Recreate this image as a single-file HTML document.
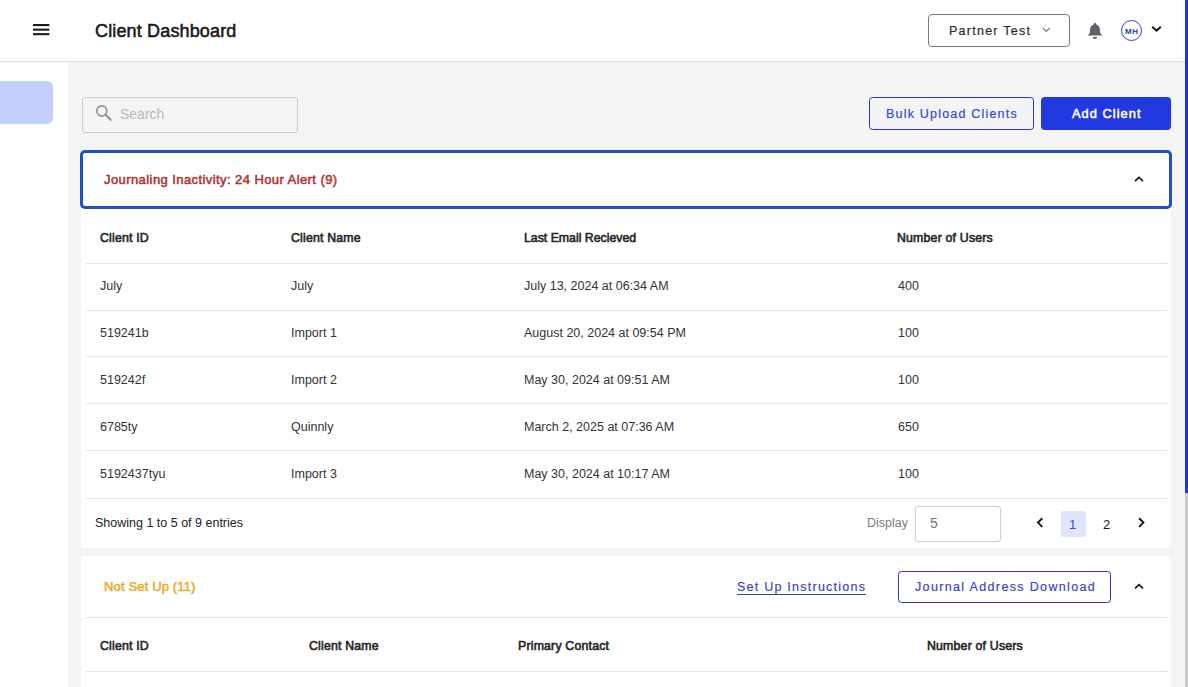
<!DOCTYPE html>
<html>
<head>
<meta charset="utf-8">
<style>
*{box-sizing:border-box;margin:0;padding:0}
html,body{width:1188px;height:687px;overflow:hidden;background:#f4f4f4;font-family:"Liberation Sans",sans-serif;color:#2b2b2b}
.abs{position:absolute}
.t{position:absolute;white-space:nowrap;line-height:1}
#header{position:absolute;left:0;top:0;width:1188px;height:62px;background:#fff;border-bottom:1px solid #dedede}
#sidebar{position:absolute;left:0;top:62px;width:68px;height:625px;background:#fff}
#sideitem{position:absolute;left:0;top:81px;width:53px;height:43px;background:#c4cefb;border-radius:0 6px 6px 0}
.ham{position:absolute;left:33px;width:16px;height:2px;background:#222}
.card{position:absolute;background:#fff;border-radius:4px}
.div{position:absolute;height:1px;background:#e3e3e3}
.th{position:absolute;white-space:nowrap;line-height:1;font-size:12.3px;letter-spacing:0.2px;font-weight:400;color:#262626;-webkit-text-stroke:0.6px #262626}
.td{position:absolute;white-space:nowrap;line-height:1;font-size:12.5px;color:#333}
#scroll{position:absolute;left:1185px;top:0;width:3px;height:687px;background:#c8c8c8}
#thumb{position:absolute;left:1185px;top:0;width:3px;height:493px;background:#2433d9}
</style>
</head>
<body>
<div id="header">
  <div class="t" style="left:95px;top:22px;font-size:18px;letter-spacing:0.15px;color:#1a1a1a;-webkit-text-stroke:0.55px #1a1a1a">Client Dashboard</div>
  <div class="abs" style="left:928px;top:14px;width:142px;height:33px;border:1px solid #7a7a7a;border-radius:4px"></div>
  <div class="t" style="left:949px;top:25px;font-size:12.5px;letter-spacing:1.25px;color:#2a2a2a;-webkit-text-stroke:0.2px #2a2a2a">Partner Test</div>
  <div class="abs" style="left:1121px;top:20px;width:21px;height:21px;border:1.5px solid #3338d8;border-radius:50%"></div>
  <div class="t" style="left:1125px;top:27.5px;font-size:8px;font-weight:700;color:#2e3ab8;letter-spacing:0.6px">MH</div>
</div>
<div id="sidebar"></div>
<div id="sideitem"></div>

<!-- search -->
<div class="abs" style="left:82px;top:97px;width:216px;height:36px;border:1px solid #cdcdcd;border-radius:3px;background:#f4f4f4"></div>
<div class="t" style="left:120px;top:107px;font-size:14px;color:#b9b9b9">Search</div>

<!-- buttons -->
<div class="abs" style="left:869px;top:97px;width:165px;height:33px;border:1px solid #2e36c6;border-radius:3.5px;background:#f3f3f5"></div>
<div class="t" style="left:886px;top:108px;font-size:12.5px;letter-spacing:1.2px;color:#3342c8;-webkit-text-stroke:0.15px #3342c8">Bulk Upload Clients</div>
<div class="abs" style="left:1041px;top:97px;width:130px;height:33px;border-radius:4px;background:#2339e0"></div>
<div class="t" style="left:1072px;top:108px;font-size:12.8px;font-weight:400;letter-spacing:1.05px;-webkit-text-stroke:0.55px #fff;color:#fff">Add Client</div>

<!-- card 1 -->
<div class="card" style="left:81px;top:152px;width:1090px;height:396px"></div>
<div class="abs" style="left:80px;top:150px;width:1092px;height:59px;border:3px solid #2050c6;border-radius:5px;background:#fff"></div>
<div class="t" style="left:104px;top:173px;font-size:13px;font-weight:400;letter-spacing:0.42px;-webkit-text-stroke:0.5px #ad3232;color:#ad3232">Journaling Inactivity: 24 Hour Alert (9)</div>

<div class="th" style="left:100px;top:232px">Client ID</div>
<div class="th" style="left:291px;top:232px">Client Name</div>
<div class="th" style="left:524px;top:232px;font-size:12.3px;letter-spacing:0">Last Email Recieved</div>
<div class="th" style="left:897px;top:232px">Number of Users</div>
<div class="div" style="left:86px;top:263px;width:1081px"></div>

<div class="td" style="left:100px;top:280px">July</div>
<div class="td" style="left:291px;top:280px">July</div>
<div class="td" style="left:524px;top:280px">July 13, 2024 at 06:34 AM</div>
<div class="td" style="left:898px;top:280px">400</div>
<div class="div" style="left:86px;top:310px;width:1081px"></div>

<div class="td" style="left:100px;top:327px">519241b</div>
<div class="td" style="left:291px;top:327px">Import 1</div>
<div class="td" style="left:524px;top:327px">August 20, 2024 at 09:54 PM</div>
<div class="td" style="left:898px;top:327px">100</div>
<div class="div" style="left:86px;top:356px;width:1081px"></div>

<div class="td" style="left:100px;top:374px">519242f</div>
<div class="td" style="left:291px;top:374px">Import 2</div>
<div class="td" style="left:524px;top:374px">May 30, 2024 at 09:51 AM</div>
<div class="td" style="left:898px;top:374px">100</div>
<div class="div" style="left:86px;top:403px;width:1081px"></div>

<div class="td" style="left:100px;top:421px">6785ty</div>
<div class="td" style="left:291px;top:421px">Quinnly</div>
<div class="td" style="left:524px;top:421px">March 2, 2025 at 07:36 AM</div>
<div class="td" style="left:898px;top:421px">650</div>
<div class="div" style="left:86px;top:450px;width:1081px"></div>

<div class="td" style="left:100px;top:468px">5192437tyu</div>
<div class="td" style="left:291px;top:468px">Import 3</div>
<div class="td" style="left:524px;top:468px">May 30, 2024 at 10:17 AM</div>
<div class="td" style="left:898px;top:468px">100</div>
<div class="div" style="left:86px;top:498px;width:1081px"></div>

<div class="td" style="left:95px;top:517px;color:#222">Showing 1 to 5 of 9 entries</div>
<div class="td" style="left:867px;top:517px;color:#7b7b7b">Display</div>
<div class="abs" style="left:915px;top:506px;width:86px;height:36px;border:1px solid #cfcfcf;border-radius:3px;background:#fff"></div>
<div class="t" style="left:930px;top:516px;font-size:14px;color:#747474">5</div>
<div class="abs" style="left:1061px;top:511px;width:25px;height:26px;background:#e1e5fb;border-radius:2px"></div>
<div class="t" style="left:1069px;top:518px;font-size:13px;color:#3a4ad4">1</div>
<div class="t" style="left:1103px;top:518px;font-size:13px;color:#1a1a1a">2</div>

<!-- card 2 -->
<div class="card" style="left:81px;top:556px;width:1090px;height:140px"></div>
<div class="t" style="left:104px;top:580px;font-size:13px;font-weight:400;letter-spacing:0.15px;-webkit-text-stroke:0.55px #e8ad2c;color:#e8ad2c">Not Set Up (11)</div>
<div class="t" style="left:737px;top:581px;font-size:12.5px;letter-spacing:1.24px;color:#3342c8;-webkit-text-stroke:0.15px #3342c8;text-decoration:underline;text-underline-offset:3px">Set Up Instructions</div>
<div class="abs" style="left:898px;top:571px;width:213px;height:32px;border:1px solid #2e36c6;border-radius:3.5px;background:#fff"></div>
<div class="t" style="left:915px;top:581px;font-size:12.5px;letter-spacing:1.35px;color:#3342c8;-webkit-text-stroke:0.15px #3342c8">Journal Address Download</div>
<div class="abs" style="left:81px;top:617px;width:1090px;height:80px;border-top:1px solid #e3e3e3;border-radius:6px 6px 0 0"></div>
<div class="th" style="left:100px;top:640px">Client ID</div>
<div class="th" style="left:309px;top:640px">Client Name</div>
<div class="th" style="left:518px;top:640px">Primary Contact</div>
<div class="th" style="left:927px;top:640px">Number of Users</div>
<div class="div" style="left:86px;top:671px;width:1081px"></div>

<svg id="icons" style="position:absolute;left:0;top:0" width="1188" height="687" viewBox="0 0 1188 687">
  <g fill="#1c1c1c"><rect x="33" y="24" width="16.3" height="2.1"/><rect x="33" y="28.6" width="16.3" height="2.1"/><rect x="33" y="33.1" width="16.3" height="2.1"/></g>
  <path d="M1043 28 L1046.3 31.3 L1049.6 28" fill="none" stroke="#777" stroke-width="1.2"/>
  <g fill="#5d6169"><circle cx="1095" cy="24.2" r="1.3"/><path d="M1095 24.4 C1091.8 24.4 1090.3 26.6 1090.1 29.6 L1089.9 32.4 C1089.8 33.6 1088.2 34.4 1088.2 35.6 L1101.8 35.6 C1101.8 34.4 1100.2 33.6 1100.1 32.4 L1099.9 29.6 C1099.7 26.6 1098.2 24.4 1095 24.4 Z"/><path d="M1092.8 37 L1097.2 37 C1097.2 38.2 1096.2 39 1095 39 C1093.8 39 1092.8 38.2 1092.8 37 Z"/></g>
  <path d="M1152.2 26.7 L1156.5 30.6 L1160.8 26.7" fill="none" stroke="#1a1a1a" stroke-width="2"/>
  <circle cx="101.8" cy="111" r="5" fill="none" stroke="#9a9a9a" stroke-width="1.8"/>
  <path d="M105.6 114.8 L110.6 119.8" stroke="#9a9a9a" stroke-width="2.2" stroke-linecap="round"/>
  <path d="M1135 181.2 L1139 177.4 L1143 181.2" fill="none" stroke="#1a1a1a" stroke-width="1.75"/>
  <path d="M1135 588.3 L1139 584.6 L1143 588.3" fill="none" stroke="#1a1a1a" stroke-width="1.75"/>
  <path d="M1042.3 518.3 L1038 522.6 L1042.3 526.9" fill="none" stroke="#1a1a1a" stroke-width="2"/>
  <path d="M1139.1 518.3 L1143.4 522.6 L1139.1 526.9" fill="none" stroke="#1a1a1a" stroke-width="2"/>
</svg>
<div id="scroll"></div>
<div id="thumb"></div>
</body>
</html>
